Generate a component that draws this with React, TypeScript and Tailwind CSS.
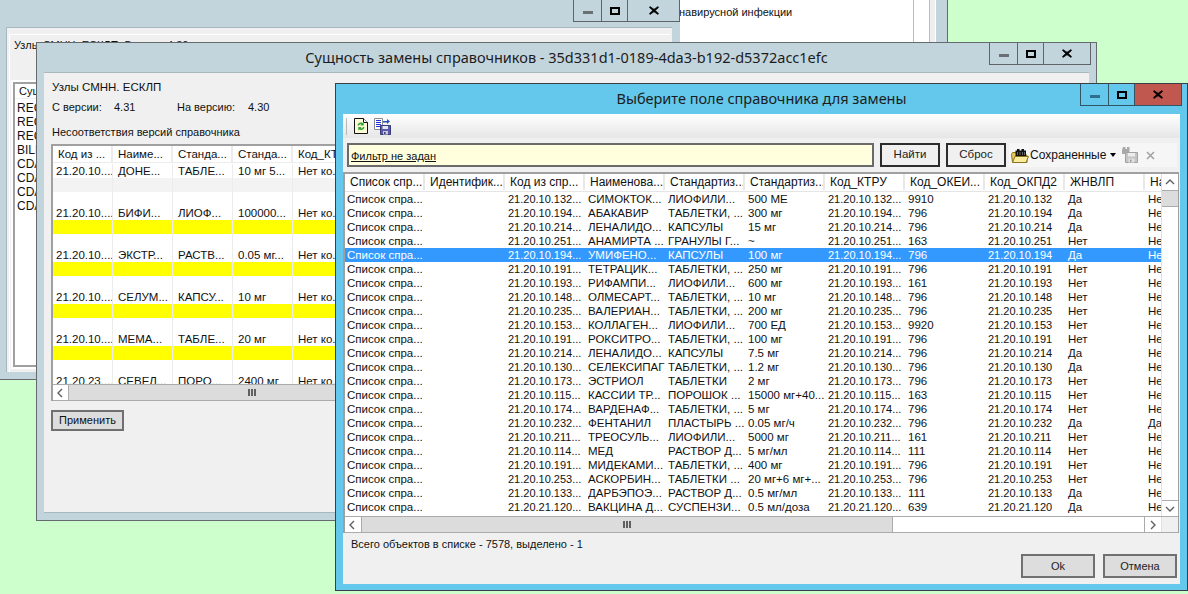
const OLD_COLS = ["Код из ...", "Наиме...", "Станда...", "Станда...", "Код_КТ"];

const OLD_ROWS = [
  { cells: ["21.20.10....", "ДОНЕ...", "ТАБЛЕ...", "10 мг 5...", "Нет ко..."] },
  { cells: ["", "", "", "", ""], bg: "bg-[#f3f3f3]" },
  { cells: ["", "", "", "", ""] },
  { cells: ["21.20.10....", "БИФИ...", "ЛИОФ...", "100000...", "Нет ко..."] },
  { cells: ["", "", "", "", ""], bg: "bg-[#ffff00]" },
  { cells: ["", "", "", "", ""] },
  { cells: ["21.20.10....", "ЭКСТР...", "РАСТВ...", "0.05 мг...", "Нет ко..."] },
  { cells: ["", "", "", "", ""], bg: "bg-[#ffff00]" },
  { cells: ["", "", "", "", ""] },
  { cells: ["21.20.10....", "СЕЛУМ...", "КАПСУ...", "10 мг", "Нет ко..."] },
  { cells: ["", "", "", "", ""], bg: "bg-[#ffff00]" },
  { cells: ["", "", "", "", ""] },
  { cells: ["21.20.10....", "МЕМА...", "ТАБЛЕ...", "20 мг", "Нет ко..."] },
  { cells: ["", "", "", "", ""], bg: "bg-[#ffff00]" },
  { cells: ["", "", "", "", ""] },
  { cells: ["21.20.23....", "СЕВЕЛ...", "ПОРО...", "2400 мг", "Нет ко..."] },
];

const NEW_HEADERS = [
  "Список спр...",
  "Идентифик...",
  "Код из спр...",
  "Наименова...",
  "Стандартиз...",
  "Стандартиз...",
  "Код_КТРУ",
  "Код_ОКЕИ...",
  "Код_ОКПД2",
  "ЖНВЛП",
  "На",
];

// code, name, form, dose, okei, vital
const NEW_ROWS = [
  ["21.20.10.132", "СИМОКТОК...", "ЛИОФИЛИ...", "500 МЕ", "9910", "Да"],
  ["21.20.10.194", "АБАКАВИР", "ТАБЛЕТКИ, ...", "300 мг", "796", "Да"],
  ["21.20.10.214", "ЛЕНАЛИДО...", "КАПСУЛЫ", "15 мг", "796", "Да"],
  ["21.20.10.251", "АНАМИРТА ...", "ГРАНУЛЫ Г...", "~", "163", "Нет"],
  ["21.20.10.194", "УМИФЕНО...", "КАПСУЛЫ", "100 мг", "796", "Да"],
  ["21.20.10.191", "ТЕТРАЦИК...", "ТАБЛЕТКИ, ...", "250 мг", "796", "Нет"],
  ["21.20.10.193", "РИФАМПИ...", "ЛИОФИЛИ...", "600 мг", "161", "Нет"],
  ["21.20.10.148", "ОЛМЕСАРТ...", "ТАБЛЕТКИ, ...", "10 мг", "796", "Нет"],
  ["21.20.10.235", "ВАЛЕРИАН...", "ТАБЛЕТКИ, ...", "200 мг", "796", "Нет"],
  ["21.20.10.153", "КОЛЛАГЕН...", "ЛИОФИЛИ...", "700 ЕД", "9920", "Нет"],
  ["21.20.10.191", "РОКСИТРО...", "ТАБЛЕТКИ, ...", "100 мг", "796", "Нет"],
  ["21.20.10.214", "ЛЕНАЛИДО...", "КАПСУЛЫ", "7.5 мг", "796", "Да"],
  ["21.20.10.130", "СЕЛЕКСИПАГ", "ТАБЛЕТКИ, ...", "1.2 мг", "796", "Да"],
  ["21.20.10.173", "ЭСТРИОЛ", "ТАБЛЕТКИ", "2 мг", "796", "Нет"],
  ["21.20.10.115", "КАССИИ ТР...", "ПОРОШОК ...", "15000 мг+40...", "163", "Нет"],
  ["21.20.10.174", "ВАРДЕНАФ...", "ТАБЛЕТКИ, ...", "5 мг", "796", "Нет"],
  ["21.20.10.232", "ФЕНТАНИЛ", "ПЛАСТЫРЬ ...", "0.05 мг/ч", "796", "Да"],
  ["21.20.10.211", "ТРЕОСУЛЬ...", "ЛИОФИЛИ...", "5000 мг", "161", "Нет"],
  ["21.20.10.114", "МЕД", "РАСТВОР Д...", "5 мг/мл", "111", "Нет"],
  ["21.20.10.191", "МИДЕКАМИ...", "ТАБЛЕТКИ, ...", "400 мг", "796", "Нет"],
  ["21.20.10.253", "АСКОРБИН...", "ТАБЛЕТКИ ...", "20 мг+6 мг+...", "796", "Нет"],
  ["21.20.10.133", "ДАРБЭПОЭ...", "РАСТВОР Д...", "0.5 мг/мл", "111", "Да"],
  ["21.20.21.120", "ВАКЦИНА Д...", "СУСПЕНЗИ...", "0.5 мл/доза", "639", "Да"],
];

const SELECTED_ROW = 4;
const FENTANYL_ROW = 16;

const WindowControls = ({ active, wide }: { active?: boolean; wide?: boolean }) => {
  const line = active ? "border-[#2f5566]" : "border-[#5f6468]";
  return (
    <div className={`flex h-[22px] border-x border-b ${line}`}>
      <div className={`w-[28px] flex items-center justify-center border-r ${line}`}>
        <div className={`w-[10px] h-[3px] mt-[4px] ${active ? "bg-[#2f6f8c]" : "bg-[#6a6f73]"}`} />
      </div>
      <div className={`w-[26px] flex items-center justify-center border-r ${line}`}>
        <div className="w-[10px] h-[8px] border-2 border-black" />
      </div>
      <div className={`${wide ? "w-[51px]" : "w-[46px]"} flex items-center justify-center ${active ? "bg-[#c1584f]" : ""}`}>
        <svg width="10" height="9" viewBox="0 0 10 9">
          <path d="M1 .5 5 3.2 9 .5 9.6 1.5 6.3 4.5 9.6 7.5 9 8.5 5 5.8 1 8.5.4 7.5 3.7 4.5.4 1.5Z" fill="#000" stroke="#000" strokeWidth=".6" />
        </svg>
      </div>
    </div>
  );
};

const ScrollGrip = () => (
  <div className="flex gap-[1px]">
    <div className="w-[2px] h-[7px] bg-[#606060]" />
    <div className="w-[2px] h-[7px] bg-[#606060]" />
    <div className="w-[2px] h-[7px] bg-[#606060]" />
  </div>
);

const Chevron = ({ dir }: { dir: "left" | "right" | "up" | "down" }) => {
  const paths = {
    left: "M6 1 2 5 6 9",
    right: "M3 1 7 5 3 9",
    up: "M1 7 5 3 9 7",
    down: "M1 3 5 7 9 3",
  };
  return (
    <svg width="10" height="10" viewBox="0 0 10 10">
      <path d={paths[dir]} fill="none" stroke="#606060" strokeWidth="1.4" />
    </svg>
  );
};

const RefreshIcon = () => (
  <svg width="14" height="16" viewBox="0 0 14 16">
    <path d="M.5.5H9.5L13.5 4.5V15.5H.5Z" fill="#fdfbd8" stroke="#111" />
    <path d="M9.5.5V4.5H13.5" fill="#fff" stroke="#111" />
    <path d="M3.5 7.5C3.8 5 6.5 3.8 8.5 5L9.7 4V7.6H6.2L7.4 6.4C6.5 5.8 5.3 6.3 5 7.5Z" fill="#2fa52f" />
    <path d="M10.5 9C10.2 11.5 7.5 12.8 5.5 11.5L4.3 12.6V9H7.8L6.6 10.1C7.5 10.8 8.7 10.2 9 9Z" fill="#2fa52f" />
  </svg>
);

const SaveListIcon = () => (
  <svg width="17" height="17" viewBox="0 0 17 17">
    <path d="M.5.5H8.5V11.5H.5Z" fill="#fff" stroke="#8a8a8a" />
    <path d="M2 2.5H7M2 4.5H7M2 6.5H7M2 8.5H7" stroke="#2230d0" />
    <path d="M9 3H13V1L16 3.5 13 6V4.5H9Z" fill="#2a4fc0" />
    <path d="M6.5 7.5H16.5V16.5H6.5Z" fill="#5a5aa8" stroke="#3a3a78" />
    <path d="M8.5 8H14V11H8.5Z" fill="#e4e4f2" />
    <path d="M9 13H14V16.5H9Z" fill="#c8c8dc" />
    <path d="M10 14H11.5V16H10Z" fill="#3a3a78" />
  </svg>
);

const SavedFolderIcon = () => (
  <svg width="18" height="17" viewBox="0 0 18 17">
    <path d="M.5 7.5 1.5 5.5H6V8H16V15.5H1.5Z" fill="#e8c85a" stroke="#8a7420" />
    <path d="M1.5 15.5 4 9.5H17.5L15 15.5Z" fill="#fbeb9c" stroke="#8a7420" />
    <path d="M6 2H8.5V3.5H10.5V2H13V3.5H15V9H4.5V3.5H6Z" fill="#111" />
    <path d="M6.5 5V8M9 5V8M11.5 5V8M13.5 5V8" stroke="#8a8a8a" strokeWidth=".7" />
  </svg>
);

const DisabledSaveIcon = () => (
  <svg width="18" height="18" viewBox="0 0 18 18">
    <path d="M2 1H4.5V3H6V1H8.5V8H1V4Z" fill="#a9a9a9" />
    <path d="M4.5 6.5H16.5V16.5H4.5Z" fill="#c4c4c4" stroke="#a2a2a2" />
    <path d="M7 7H14V10.5H7Z" fill="#ececec" />
    <path d="M7.5 12.5H13.5V16.5H7.5Z" fill="#e2e2e2" />
    <path d="M9 13.5H10.5V16H9Z" fill="#9c9c9c" />
  </svg>
);

const BackWindow = () => (
  <div className="absolute left-0 top-0 w-[680px] h-[380px] flex flex-col bg-[#c3d5dc] border-b border-[#666a6e]">
    <div className="h-[27px] flex justify-end items-start shrink-0">
      <WindowControls wide />
    </div>
    <div className="ml-[6px] mr-[8px] h-[345px] bg-[#f0f0f0] border-t border-l border-[#a9b7bf] pt-[6px] pl-[2px] pr-[2px]">
      <div className="h-full bg-[#f0f0f0] border-t border-l border-white pl-[4px] pt-[3px]">
        <div className="flex h-[14px] leading-[14px] whitespace-nowrap">
          <span className="w-[153px]">Узлы СМНН. ЕСКЛП. Версия</span>
          <span>4.30</span>
        </div>
        <div className="mt-[30px] -ml-[1px] h-[285px] w-[640px] border-2 border-[#a0a0a0] outline-2 outline-white bg-white">
          <div className="h-[15px] pl-[4px] leading-[15px] border-b border-[#f0f0f0]">Сущность</div>
          <div className="pt-[2px] pl-[2px] leading-[14px] text-[12px]">
            <div>RECORD</div>
            <div>RECORD</div>
            <div>RECORD</div>
            <div>BILLING</div>
            <div>CDA_DOC</div>
            <div>CDA_DOC</div>
            <div>CDA_DOC</div>
            <div>CDA_DOC</div>
          </div>
        </div>
      </div>
    </div>
  </div>
);

const FarWindow = () => (
  <div className="absolute left-[680px] top-0 w-[268px] h-[380px] flex bg-[#c3d5dc] border-r border-[#666a6e]">
    <div className="w-[235px] bg-white border-r border-[#bbbbbb] pt-[5px] leading-[14px] -ml-[1px] whitespace-nowrap">
      навирусной инфекции
    </div>
    <div className="w-[16px] bg-white border-r border-[#bbbbbb]" />
    <div className="w-[6px] bg-[#eeeeee] border-r border-white" />
  </div>
);

const SubstitutionWindow = () => (
  <div className="absolute left-[36px] top-[42px] w-[1061px] h-[479px] flex flex-col bg-[#c3d5dc] border border-[#666a6e]">
    <div className="relative h-[29px] shrink-0 flex items-center justify-center text-[14.5px] text-[#1c1c1c] [font-family:'Noto_Sans',sans-serif]">
      Сущность замены справочников - 35d331d1-0189-4da3-b192-d5372acc1efc
      <div className="absolute right-[5px] top-0">
        <WindowControls />
      </div>
    </div>
    <div className="mx-[7px] flex-1 mb-[7px] bg-[#f0f0f0] border-t border-[#a9b7bf] border-b pt-[7px] pl-[8px] pr-[4px]">
      <div className="h-[14px] leading-[14px] text-[11.5px]">Узлы СМНН. ЕСКЛП</div>
      <div className="flex mt-[6px] h-[14px] leading-[14px]">
        <span className="w-[62px]">С версии:</span>
        <span className="w-[63px]">4.31</span>
        <span className="w-[71px]">На версию:</span>
        <span>4.30</span>
      </div>
      <div className="mt-[11px] h-[14px] leading-[14px]">Несоответствия версий справочника</div>
      <div className="mt-[5px] -ml-[1px] h-[257px] flex flex-col border-l-2 border-t-2 border-[#a0a0a0] bg-white border-b-0 text-[11.5px]">
        <div className="flex-1 overflow-hidden">
          <div className="grid grid-cols-[60px_60px_60px_60px_60px] h-[17px] border-b border-[#ececec]">
            {OLD_COLS.map((title, i) => (
              <div
                key={i}
                className="h-[16px] leading-[16px] border-r-2 border-[#ececec] whitespace-nowrap overflow-hidden pl-[5px]"
              >
                {title}
              </div>
            ))}
          </div>
          <div className="pt-[1px]">
            {OLD_ROWS.map((row, r) => (
              <div key={r} className={`grid grid-cols-[60px_60px_60px_60px_60px] h-[14px] ${row.bg ?? ""}`}>
                {row.cells.map((cell, c) => (
                  <div
                    key={c}
                    className={`h-[14px] leading-[14px] border-r border-[#ececec] whitespace-nowrap overflow-hidden ${
                      c === 0 ? "pl-[3px]" : "pl-[5px]"
                    }`}
                  >
                    {cell}
                  </div>
                ))}
              </div>
            ))}
          </div>
        </div>
        <div className="h-[17px] shrink-0 flex bg-[#dcdcdc] border-y border-[#ababab]">
          <div className="w-[16px] bg-white border-r border-[#ababab] flex items-center justify-center">
            <Chevron dir="left" />
          </div>
          <div className="flex-1 flex items-center pl-[179px]">
            <ScrollGrip />
          </div>
        </div>
      </div>
      <button className="mt-[9px] -ml-[1px] block w-[73px] h-[21px] border-2 border-[#707070] bg-[#dddddd] text-center leading-[17px]">
        Применить
      </button>
    </div>
  </div>
);

const FieldPickerWindow = () => (
  <div className="absolute left-[335px] top-[83px] w-[853px] h-[508px] flex flex-col bg-[#63c8eb] border border-[#3a3f44]">
    <div className="relative h-[30px] shrink-0 flex items-center justify-center text-[14.5px] text-[#1c1c1c] [font-family:'Noto_Sans',sans-serif]">
      Выберите поле справочника для замены
      <div className="absolute right-[5px] top-0">
        <WindowControls active />
      </div>
    </div>
    <div className="mx-[7px] mb-[6px] flex-1 flex flex-col bg-[#f0f0f0]">
      <div className="h-[24px] shrink-0 flex items-center pl-[3px] gap-[7px] bg-gradient-to-b from-white to-[#e6e6e6]">
        <div className="w-[1px] h-[17px] bg-[#b8b8b8]" />
        <RefreshIcon />
        <div className="-ml-[1px]">
          <SaveListIcon />
        </div>
      </div>
      <div className="h-[24px] mt-[5px] shrink-0 flex pl-[4px] pr-[3px]">
        <div className="w-[527px] h-full border-2 border-[#6a6a6a] bg-[#ffffdd] pl-[2px] pt-[4px] leading-[14px] underline">
          Фильтр не задан
        </div>
        <button className="ml-[6px] w-[60px] h-full border-2 border-[#2c2c2c] bg-[#f0f0f0] text-center text-[#222222] text-[11.5px]">
          Найти
        </button>
        <button className="ml-[6px] w-[60px] h-full border-2 border-[#2c2c2c] bg-[#f0f0f0] text-center text-[#222222] text-[11.5px]">
          Сброс
        </button>
        <div className="ml-[3px] flex-1 flex items-center bg-[#f6f6f6] pl-[2px] text-[12px]">
          <SavedFolderIcon />
          <span className="ml-[1px] w-[76px]">Сохраненные</span>
          <div className="ml-[4px] w-0 h-0 border-x-[3px] border-x-transparent border-t-[4px] border-t-black" />
          <div className="ml-[5px]">
            <DisabledSaveIcon />
          </div>
          <svg className="ml-[7px]" width="9" height="9" viewBox="0 0 9 9">
            <path d="M1 1 8 8M8 1 1 8" stroke="#a0a0a0" strokeWidth="1.5" />
          </svg>
        </div>
      </div>
      <div className="mt-[5px] mr-[1px] h-[361px] shrink-0 flex flex-col border-l-2 border-t-2 border-r border-[#a0a0a0] bg-white">
        <div className="flex-1 min-h-0 flex">
          <div className="flex-1 min-w-0 overflow-hidden">
            <div className="flex h-[18px] border-b border-[#e5e5e5] whitespace-nowrap text-[12px]">
              {NEW_HEADERS.map((title, i) => (
                <div
                  key={i}
                  className="w-[80px] shrink-0 h-[16px] leading-[16px] pl-[5px] border-r-2 border-[#e8e8e8] overflow-hidden"
                >
                  {title}
                </div>
              ))}
            </div>
            <div>
              {NEW_ROWS.map(([code, name, form, dose, okei, vital], r) => (
                <div
                  key={r}
                  className={`flex h-[14px] leading-[14px] whitespace-nowrap text-[11.5px] ${
                    r === SELECTED_ROW ? "bg-[#3399ff] text-white" : ""
                  }`}
                >
                  <div className="w-[83px] shrink-0 pl-[2px]">Список спра...</div>
                  <div className="w-[80px] shrink-0" />
                  <div className="w-[80px] shrink-0 text-[11px]">{code}...</div>
                  <div className="w-[80px] shrink-0 overflow-hidden">{name}</div>
                  <div className="w-[80px] shrink-0 overflow-hidden">{form}</div>
                  <div className="w-[80px] shrink-0 overflow-hidden">{dose}</div>
                  <div className="w-[80px] shrink-0 text-[11px]">{code}...</div>
                  <div className="w-[80px] shrink-0">{okei}</div>
                  <div className="w-[80px] shrink-0 text-[11px]">{code}</div>
                  <div className="w-[80px] shrink-0">{vital}</div>
                  <div className="w-[20px] shrink-0">{r === FENTANYL_ROW ? "Да" : "Не"}</div>
                </div>
              ))}
            </div>
          </div>
          <div className="w-[17px] shrink-0 flex flex-col border-l border-[#e0e0e0]">
            <div className="h-[16px] flex items-center justify-center">
              <Chevron dir="up" />
            </div>
            <div className="h-[17px] bg-[#dcdcdc] border-y border-[#ababab]" />
            <div className="flex-1" />
            <div className="h-[16px] flex items-center justify-center border-t border-[#ababab]">
              <Chevron dir="down" />
            </div>
          </div>
        </div>
        <div className="h-[17px] shrink-0 flex border-y border-[#ababab]">
          <div className="w-[17px] bg-white border-r border-[#ababab] flex items-center justify-center">
            <Chevron dir="left" />
          </div>
          <div className="w-[531px] flex items-center justify-center bg-[#dcdcdc] border-r border-[#ababab]">
            <ScrollGrip />
          </div>
          <div className="flex-1" />
          <div className="w-[17px] border-l border-[#ababab] flex items-center justify-center">
            <Chevron dir="right" />
          </div>
          <div className="w-[17px] bg-[#f0f0f0] border-l border-[#e0e0e0]" />
        </div>
      </div>
      <div className="flex-1 flex flex-col pl-[8px] pr-[3px] pt-[4px]">
        <div className="h-[14px] leading-[14px]">Всего объектов в списке - 7578, выделено - 1</div>
        <div className="mt-[3px] flex justify-end gap-[8px]">
          <button className="w-[74px] h-[24px] border-2 border-[#707070] bg-[#dddddd] text-center text-[#222222]">
            Ok
          </button>
          <button className="w-[74px] h-[24px] border-2 border-[#707070] bg-[#dddddd] text-center text-[#222222]">
            Отмена
          </button>
        </div>
      </div>
    </div>
  </div>
);

const App = () => {
  return (
    <div className="relative w-[1188px] h-[594px] overflow-hidden bg-[#ccffcc] text-[11px] text-[#111111] [font-family:'Liberation_Sans',sans-serif]">
      <FarWindow />
      <BackWindow />
      <SubstitutionWindow />
      <FieldPickerWindow />
    </div>
  );
};

export default App;
